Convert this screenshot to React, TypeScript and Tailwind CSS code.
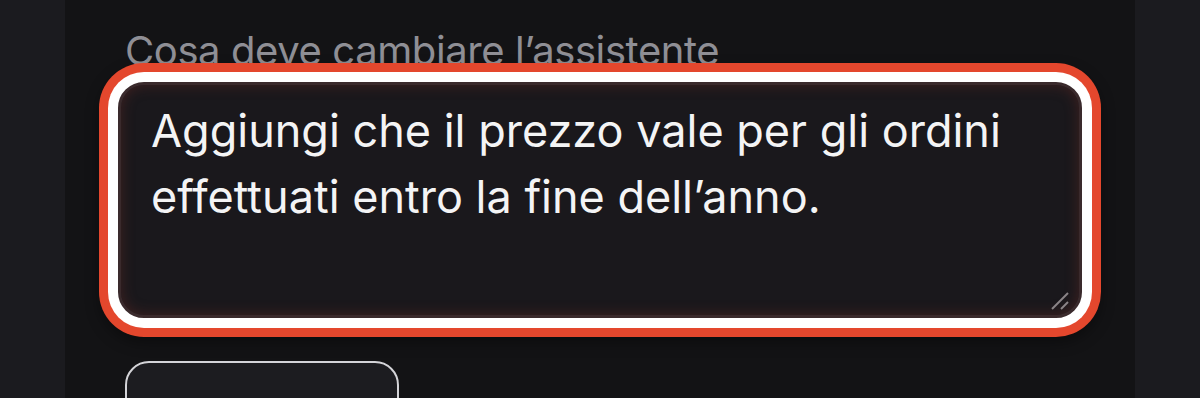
import React from 'react';

const App: React.FC = () => {
    const [value, setValue] = React.useState(
        'Aggiungi che il prezzo vale per gli ordini effettuati entro la fine dell\u2019anno.'
    );

    return (
        <div className="min-h-[398px] bg-[#1b1b1f] flex justify-center overflow-hidden font-['Inter','Noto_Sans',sans-serif]">
            <div className="w-[1070px] bg-[#131315] px-[53px] pt-[27px] flex flex-col">
                <label className="ml-[7px] text-[40px] leading-[48px] text-[#8f8f95] tracking-[-0.4px]">
                    Cosa deve cambiare l’assistente
                </label>

                <div className="relative z-10 mt-[7px]">
                    <textarea
                        value={value}
                        onChange={(e) => setValue(e.target.value)}
                        className="block w-full h-[236px] resize-none rounded-[26px] border-[3px] border-[#3a2a2c] bg-[#1a181c] pl-[30px] pr-[30px] pt-[13px] text-[45px] leading-[66px] text-[#f4f4f5] outline-none shadow-[inset_0_0_14px_rgba(110,45,38,0.45),0_0_0_10px_#ffffff,0_0_0_19px_#e4472d,0_6px_14px_19px_rgba(0,0,0,0.35)]"
                    />
                    {/* resize grip */}
                    <svg
                        className="absolute right-[12px] bottom-[7px] pointer-events-none"
                        width="20"
                        height="20"
                        viewBox="0 0 20 20"
                    >
                        <line x1="2" y1="18" x2="18" y2="2" stroke="#8a8487" strokeWidth="2" />
                        <line x1="11" y1="18" x2="18" y2="11" stroke="#8a8487" strokeWidth="2" />
                    </svg>
                </div>

                <button
                    aria-label="Applica"
                    className="ml-[7px] mt-[43px] w-[274px] h-[90px] shrink-0 rounded-[24px] border-2 border-[#d4d4d8] bg-[#1c1c20]"
                />
            </div>
        </div>
    );
};

export default App;
